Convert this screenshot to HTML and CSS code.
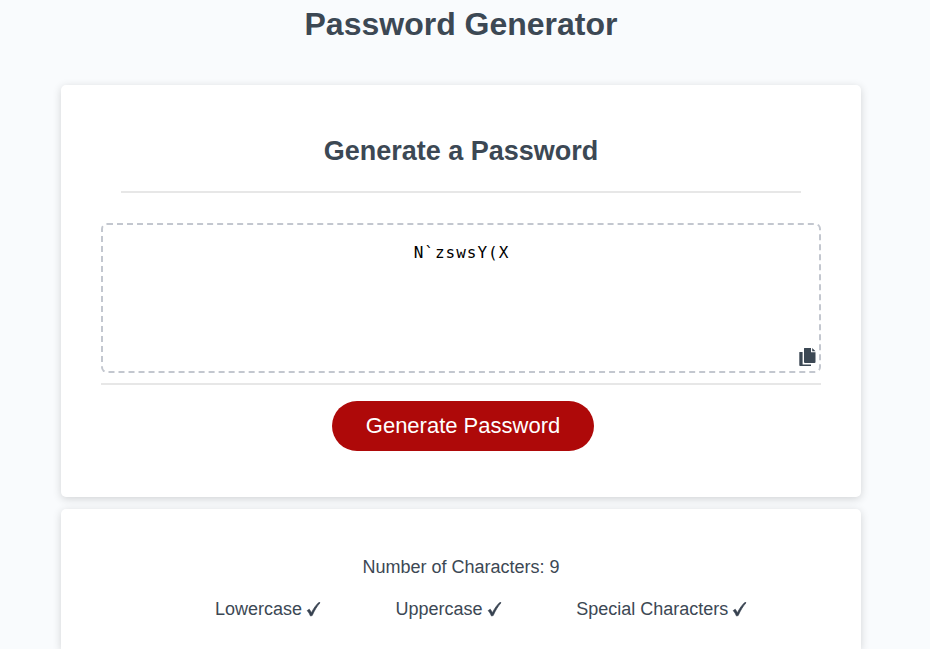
FILE: index.html
```html
<!DOCTYPE html>
<html lang="en">
<head>
<meta charset="utf-8">
<title>Password Generator</title>
<link rel="stylesheet" href="styles.css">
</head>
<body>
<div class="wrapper">
  <header><h1>Password Generator</h1></header>
  <section class="card">
    <div class="card-header"><h2>Generate a Password</h2></div>
    <div class="card-body">
      <div class="password">N`zswsY(X</div>
      <svg class="copy" viewBox="0 0 17 19" aria-label="Copy"><path d="M.6 4H3.600V16.500H12V18H1.100Q.3 18 .3 17.200V4.300ZM5.300 0H12V4.300H16.500V14Q16.500 15 15.500 15H6Q5 15 5 14V.5ZM13.200 0 16.500 3.200H13.200Z"/></svg>
    </div>
    <div class="card-footer"><button class="btn">Generate Password</button></div>
  </section>
  <section class="card options">
    <p class="count">Number of Characters: 9</p>
    <ul class="choices">
      <li>Lowercase <svg class="check" viewBox="0 0 15 16"><path d="M1.200 9.600 3.300 8.300 5.500 11.700C7.500 7.500 10 4 13 1.300L14 1.800C10.800 5.500 8.300 9.600 6.200 14.500L4.500 15C3.700 12.800 2.600 11 1.200 9.600Z"/></svg></li>
      <li>Uppercase <svg class="check" viewBox="0 0 15 16"><path d="M1.200 9.600 3.300 8.300 5.500 11.700C7.500 7.500 10 4 13 1.300L14 1.800C10.800 5.500 8.300 9.600 6.200 14.500L4.500 15C3.700 12.800 2.600 11 1.200 9.600Z"/></svg></li>
      <li>Special Characters <svg class="check" viewBox="0 0 15 16"><path d="M1.200 9.600 3.300 8.300 5.500 11.700C7.500 7.500 10 4 13 1.300L14 1.800C10.800 5.500 8.300 9.600 6.200 14.500L4.500 15C3.700 12.800 2.600 11 1.200 9.600Z"/></svg></li>
    </ul>
  </section>
</div>
</body>
</html>
```
FILE: styles.css
```css
* { box-sizing: border-box; }
html, body { height: 100%; margin: 0; overflow: hidden; }
body {
  font-family: "Liberation Sans", Arial, sans-serif;
  background: #f9fbfd;
  color: #3c4854;
}
.wrapper { width: 800px; margin-left: 61px; padding-top: 5px; }
h1, h2, p, ul { margin: 0; padding: 0; }
h1 { font-size: 32px; line-height: 39px; text-align: center; }
.card {
  height: 412px;
  padding: 40px;
  background: #fff;
  border-radius: 5px;
  box-shadow: 0 2px 9px rgba(0, 0, 0, .16);
}
header { height: 80px; }
.card-header { margin: 0 20px; height: 68px; border-bottom: 2px solid #e7e7e7; text-align: center; }
h2 { font-size: 27px; line-height: 53px; }
.card-body { position: relative; height: 192px; padding-top: 30px; border-bottom: 2px solid #e7e7e7; }
.password {
  height: 150px;
  padding: 18px 0 0 1px;
  border: 2px dashed #c3c7cf;
  border-radius: 6px;
  text-align: center;
  font: 16px/20px "DejaVu Sans Mono", monospace;
  letter-spacing: 1px;
  color: #000;
}
.copy { position: absolute; right: 5px; bottom: 16px; width: 17px; height: 19px; fill: #3c4854; }
.card-footer { padding: 16px 0 0 231px; }
.btn {
  width: 262px;
  height: 50px;
  border: 0;
  border-radius: 25px;
  background: #ae0909;
  color: #fff;
  font: 22px "Liberation Sans", Arial, sans-serif;
}
.options { height: 140px; border-radius: 5px 5px 0 0; margin-top: 12px; padding-top: 47px; font-size: 18px; line-height: 22px; }
.count { text-align: center; }
.choices { display: flex; gap: 73.500px; margin: 20px 0 0 114px; list-style: none; white-space: nowrap; }
.check { width: 15px; height: 16px; margin-left: -1px; margin-right: 1px; vertical-align: -2px; fill: #36414f; stroke: #36414f; stroke-width: .7; }
```
